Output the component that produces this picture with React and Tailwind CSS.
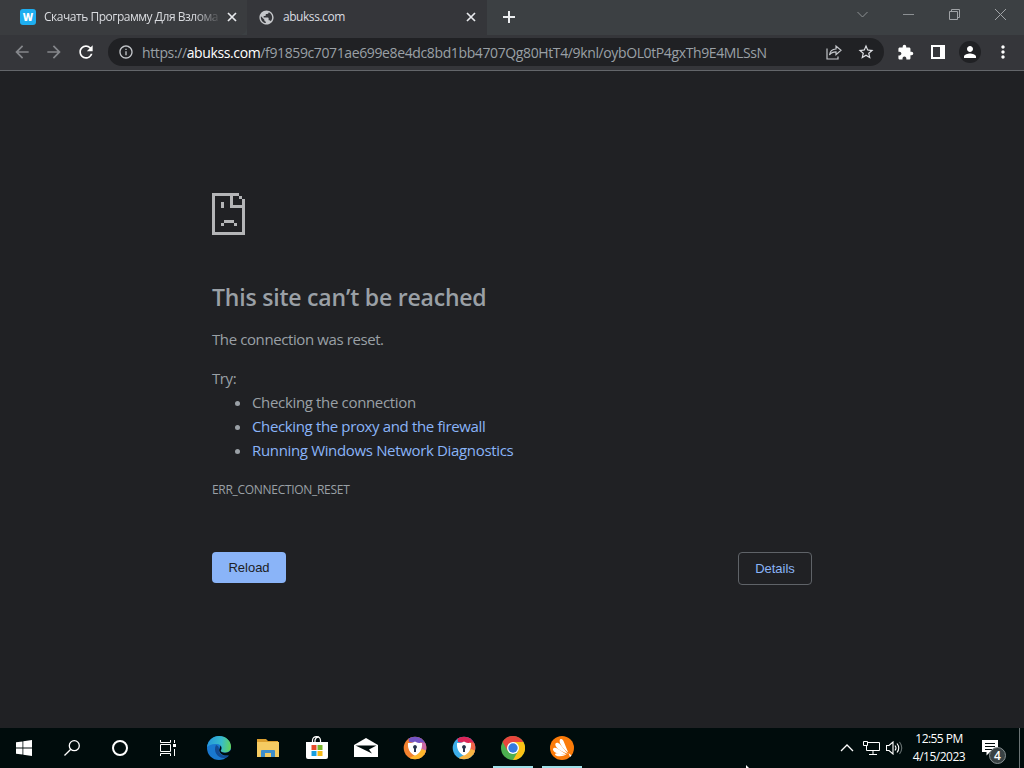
import { MdArrowBack, MdArrowForward, MdRefresh, MdInfoOutline, MdStarBorder, MdExtension, MdPerson, MdMoreVert, MdPublic } from "react-icons/md";

const CloseIcon = () => (
  <svg width="10" height="10" viewBox="0 0 10 10" fill="none" stroke="#e8eaed" strokeWidth="1.7">
    <path d="M1 1l8 8M9 1l-8 8" />
  </svg>
);

const TabStrip = () => (
  <div className="flex h-[35px] bg-[#3c4043] text-xs text-[#dadce0]">
    <div className="flex w-[247px] items-center rounded-br-lg bg-[#3a3c3f] pb-px pl-5">
      <div className="flex h-4 w-4 shrink-0 items-center justify-center rounded-[3px] bg-[#1eaef0] text-[10px] leading-none font-extrabold text-white">
        W
      </div>
      <span className="ml-2 w-[176px] whitespace-nowrap tracking-[-0.48px] [mask-image:linear-gradient(to_right,black_150px,transparent_178px)]">
        Скачать Программу Для Взлома
      </span>
      <span className="ml-[7px]">
        <CloseIcon />
      </span>
    </div>
    <div className="flex w-[240px] items-center bg-[#35363a] pb-px pl-[11px]">
      <MdPublic size={17} color="#c6c8cb" />
      <span className="ml-2 w-[176px] tracking-[-0.45px]">abukss.com</span>
      <span className="ml-[7px]">
        <CloseIcon />
      </span>
    </div>
    <div className="flex w-[44px] items-center justify-center pb-px">
      <svg width="12" height="12" viewBox="0 0 12 12" stroke="#eceef0" strokeWidth="2">
        <path d="M6 0v12M0 6h12" />
      </svg>
    </div>
    <div className="ml-auto flex h-[29px] items-center gap-[35px] pr-[18px]">
      <svg width="11" height="11" viewBox="0 0 11 11" fill="none" stroke="#8c9093">
        <path d="M.5 3l5 5 5-5" />
      </svg>
      <svg width="11" height="11" viewBox="0 0 11 11" stroke="#8c9093">
        <path d="M0 5.500h11" />
      </svg>
      <svg width="11" height="11" viewBox="0 0 11 11" fill="none" stroke="#a0a3a6">
        <path d="M.5 2.500h8v8h-8zM2.500 2.500v-2h8v8h-2" />
      </svg>
      <svg width="11" height="11" viewBox="0 0 11 11" stroke="#a0a3a6">
        <path d="M0 0l11 11M11 0L0 11" />
      </svg>
    </div>
  </div>
);

const Toolbar = () => (
  <div className="flex h-9 items-center border-b border-[#63666a] bg-[#35363a] pb-px pl-3 text-white">
    <MdArrowBack size={20} color="#85878b" />
    <MdArrowForward size={20} color="#85878b" className="ml-3" />
    <MdRefresh size={20} className="ml-3" />
    <div className="ml-3 flex h-[28px] w-[776px] items-center rounded-full bg-[#202124] pl-2.5">
      <MdInfoOutline size={16} color="#c3c6ca" />
      <span className="ml-2 w-[660px] whitespace-nowrap text-[14px] tracking-[-0.38px] text-[#9aa0a6]">
        https://<span className="text-white">abukss.com</span>
        /f91859c7071ae699e8e4dc8bd1bb4707Qg80HtT4/9knl/oybOL0tP4gxTh9E4MLSsN
      </span>
      <svg className="ml-6" width="16" height="16" viewBox="0 0 16 16" fill="none" stroke="#c3c6ca" strokeWidth="1.2">
        <path d="M1 4.500v10.500h11v-2.500" />
        <path d="M3.500 11c.4-3.800 2.500-5.800 6.500-6V2l5 4.300-5 4.300V7.900c-3 0-5 .9-6.500 3.100z" />
      </svg>
      <MdStarBorder size={18} color="#dfe1e5" className="ml-[15px]" />
    </div>
    <MdExtension size={17} className="ml-[13px]" />
    <svg className="ml-[17px]" width="14" height="14" viewBox="0 0 14 14" fill="none" stroke="white" strokeWidth="2">
      <path d="M1 1h12v12H1z" />
      <path d="M11 1v12" strokeWidth="4" />
    </svg>
    <div className="ml-[14px] flex h-[22px] w-[22px] items-center justify-center rounded-full bg-[#202124]">
      <MdPerson size={18} />
    </div>
    <MdMoreVert size={20} className="ml-3" />
  </div>
);

const SadPage = () => (
  <svg width="33" height="42" viewBox="0 0 33 42" fill="#b4b5b7" shapeRendering="crispEdges">
    <path d="M0 0h27v3h-6v9h9V6h3v36H0zM3 3v36h27V15H18V3z" fillRule="evenodd" />
    <path d="M27 3h3v3h-3zM9 9h3v6H9zM12 27h10v3H12zM9 30h3v3H9zM22 30h3v3h-3z" />
  </svg>
);

const ErrorPage = () => (
  <main className="grow bg-[#202124] pt-[122px] pl-[212px] text-[15px] leading-6 text-[#9aa0a6]">
    <div className="w-[600px]">
      <SadPage />
      <h1 className="mt-[47px] text-[23px] leading-[30px] font-semibold tracking-[-0.2px]">This site can’t be reached</h1>
      <p className="mt-[15px] tracking-[-0.4px]">The connection was reset.</p>
      <p className="mt-[15px] tracking-[-0.4px]">Try:</p>
      <ul className="list-disc pl-10">
        <li>
          <span className="tracking-[-0.34px]">Checking the connection</span>
        </li>
        <li>
          <span className="tracking-[-0.36px] text-[#8ab4f8]">Checking the proxy and the firewall</span>
        </li>
        <li>
          <span className="tracking-[-0.34px] text-[#8ab4f8]">Running Windows Network Diagnostics</span>
        </li>
      </ul>
      <p className="mt-4 text-xs leading-6 tracking-[-0.3px]">ERR_CONNECTION_RESET</p>
      <div className="mt-[50px] flex items-start justify-between font-['Liberation_Sans',sans-serif] text-[13px]">
        <button className="h-[31px] w-[74px] rounded bg-[#8ab4f8] text-[#202124]">Reload</button>
        <button className="h-[33px] w-[74px] rounded border border-[#5f6368] text-[#8ab4f8]">Details</button>
      </div>
    </div>
  </main>
);

const Edge = () => (
  <svg width="24" height="24" viewBox="0 0 24 24">
    <defs>
      <linearGradient id="edgeTop" x1="0" y1="0.4" x2="1" y2="0.5">
        <stop offset="0" stopColor="#2497dc" />
        <stop offset="0.6" stopColor="#38bccb" />
        <stop offset="1" stopColor="#62d45a" />
      </linearGradient>
    </defs>
    <circle cx="12" cy="12" r="12" fill="#1978cf" />
    <path d="M0 11C1 4.500 6 0 12 0c7 0 12 5 12 10.500 0 4-3 6-6 6-3 0-4.500-1-4-2 1.500-2 1-6-4-6.500C5.500 7.500 1.500 9 0 11z" fill="url(#edgeTop)" />
    <path d="M9 9c-3 6 1 13 8 13 2 0 3.500-.7 5-2.500-5 1.500-10-1-10-5.500 0-2 0-4-3-5z" fill="#134b93" />
    <path d="M13.500 9.500c1.200 1.500 1.200 3.400.3 4.800-.6 1.300 1.500 2.500 4.500 2.500 2.500 0 4.200-1 5.700-3v3l-2 2.500c-5 1-9.500-1.300-9.800-5.300z" fill="#000c0c" />
  </svg>
);

const Folder = () => (
  <svg width="22" height="20" viewBox="0 0 22 20">
    <path d="M0 1h9l2 2h10v4H0z" fill="#dca02f" />
    <path d="M0 4h22v15H0z" fill="#f5cb62" />
    <path d="M4 19v-6q0-1 1-1h12q1 0 1 1v6h-4v-4H8v4z" fill="#3f8ecb" />
    <path d="M8 15h6v4H8z" fill="#f5cb62" />
  </svg>
);

const Store = () => (
  <svg width="24" height="24" viewBox="0 0 24 24">
    <path d="M7.500 6V4a4 4 0 014-3.300A4 4 0 0115.500 4v2M10 6V4a4 4 0 014-3" fill="none" stroke="white" strokeWidth="1.200" />
    <path d="M1 6h22v15q0 2-2 2H3q-2 0-2-2z" fill="white" />
    <path d="M6.500 9h5v5h-5z" fill="#e74c2b" />
    <path d="M12.500 9h5v5h-5z" fill="#78b72a" />
    <path d="M6.500 15h5v5h-5z" fill="#1a9fe0" />
    <path d="M12.500 15h5v5h-5z" fill="#f7b916" />
  </svg>
);

const Mail = () => (
  <svg width="24" height="20" viewBox="0 0 24 20">
    <path d="M0 7L12 0l12 7v12H0z" fill="white" />
    <path d="M1.500 7.500h21L15 11.500l3 4z" fill="#000c0c" />
  </svg>
);

const Shield = ({ left, top, right, bottom }) => (
  <svg width="24" height="24" viewBox="0 0 24 24">
    <clipPath id="shieldClip">
      <circle cx="12" cy="12" r="11.300" />
    </clipPath>
    <g clipPath="url(#shieldClip)">
      <path d="M0 0h24v24H0z" fill={left} />
      <path d="M5 0h19v9L6 6z" fill={top} />
      <path d="M17 6l7 1v14l-7-5z" fill={right} />
      <path d="M24 15v9H3l9-5 7-6z" fill={bottom} />
    </g>
    <path d="M12 5.500c2.500 1.500 4.500 1.800 7 1.500.5 6-2 10.500-7 12.500-5-2-7.500-6.500-7-12.500 2.500.3 4.500 0 7-1.500z" fill="white" />
    <path d="M12 9a2 2 0 011 3.700V16h-2v-3.300A2 2 0 0112 9z" fill="#29344d" />
  </svg>
);

const Chrome = () => (
  <svg width="24" height="24" viewBox="0 0 24 24">
    <circle cx="12" cy="12" r="12" fill="#4caf50" />
    <path d="M1.600 6A12 12 0 0122.400 6H12L6.800 15z" fill="#e8453c" />
    <path d="M22.400 6A12 12 0 0112 24l5.200-9L12 6z" fill="#fbc116" />
    <circle cx="12" cy="12" r="6" fill="white" />
    <circle cx="12" cy="12" r="4.700" fill="#357ae0" />
  </svg>
);

const Avast = () => (
  <svg width="24" height="24" viewBox="0 0 24 24">
    <circle cx="12" cy="12" r="12" fill="#fb7b09" />
    <g fill="white">
      <path d="M10 3.500c1.500-1 3 0 3.700 2l4.500 11C14 14 8 6.500 10 3.500z" />
      <path d="M5.500 7.500c1-1.500 3-.8 4.300.6l8 9.600C10 15.500 4 10.500 5.500 7.500z" />
      <path d="M3 13c.5-1.500 2-1.700 4-.8l9.500 6.300C9 19.500 2.500 16 3 13z" />
      <path d="M5 18.300c.5-1 2-1.200 4-.7l6 1.700c-5 1.800-9.500 1.200-10-1zM18.500 17l3 2.500-1.500 1.500z" />
    </g>
  </svg>
);

const TaskItem = ({ children, open }) => (
  <div className={`flex h-10 w-[49px] items-center justify-center ${open ? "bg-[linear-gradient(#9edfe8,#9edfe8)] bg-[length:40px_2px] bg-bottom bg-no-repeat" : ""}`}>
    {children}
  </div>
);

const Taskbar = () => (
  <footer className="flex h-10 bg-[#000c0c] text-white">
    <div className="flex w-12 items-center justify-center">
      <svg width="16" height="16" viewBox="0 0 16 16" fill="white">
        <path d="M0 2.300L6.500 1.400v6.200H0zM7.300 1.300L16 0v7.600H7.300zM0 8.400h6.500v6.200L0 13.700zM7.300 8.400H16V16l-8.700-1.200z" />
      </svg>
    </div>
    <div className="flex w-12 items-center justify-center">
      <svg width="16" height="16" viewBox="0 0 16 16" fill="none" stroke="white" strokeWidth="1.300">
        <circle cx="10.300" cy="5.700" r="5" />
        <path d="M6.800 9.200L.5 15.500" />
      </svg>
    </div>
    <div className="flex w-12 items-center justify-center">
      <div className="h-4 w-4 rounded-full border-2 border-white" />
    </div>
    <div className="flex w-12 items-center justify-center">
      <svg width="16" height="16" viewBox="0 0 16 16" fill="none" stroke="white">
        <path d="M.5 0v2.500h10V0M.5 16v-2.500h10V16M.5 4.500h10v7H.5zM14.500 0v3M14.500 9v7" />
        <path d="M13 4h3v3h-3z" fill="white" stroke="none" />
      </svg>
    </div>
    <div className="ml-[2px] flex">
      <TaskItem>
        <Edge />
      </TaskItem>
      <TaskItem>
        <Folder />
      </TaskItem>
      <TaskItem>
        <Store />
      </TaskItem>
      <TaskItem>
        <Mail />
      </TaskItem>
      <TaskItem>
        <Shield left="#f5822f" top="#7454c4" right="#cc69a3" bottom="#ffb62b" />
      </TaskItem>
      <TaskItem>
        <Shield left="#3daeea" top="#dc2558" right="#f06548" bottom="#f8b543" />
      </TaskItem>
      <TaskItem open>
        <Chrome />
      </TaskItem>
      <TaskItem open>
        <Avast />
      </TaskItem>
    </div>
    <svg className="mt-[37px] ml-[159px]" width="5" height="3" viewBox="0 0 5 3" fill="white">
      <path d="M1 0l3 3H1z" />
    </svg>
    <div className="ml-auto flex items-center">
      <svg width="14" height="8" viewBox="0 0 14 8" fill="none" stroke="white" strokeWidth="1.300">
        <path d="M1 7l6-6 6 6" />
      </svg>
      <svg className="ml-[9px]" width="17" height="14" viewBox="0 0 17 14" fill="none" stroke="white">
        <path d="M5 1.500h11.500v8h-13V5M.5.500h4v4h-4zM10 9.500v4M6 13.500h8" />
      </svg>
      <svg className="ml-[6px]" width="17" height="14" viewBox="0 0 17 14" fill="none" stroke="white" strokeWidth="1.100">
        <path d="M.5 4.500H3l4-3.500v12L3 9.500H.5z" />
        <path d="M9 4.500q2 2.500 0 5M11 2.500q3.500 4.500 0 9" />
        <path d="M13.500 1q4.500 6 0 12" stroke="#657070" />
      </svg>
      <div className="ml-1 w-[64px] text-center text-xs leading-[18px] whitespace-nowrap">
        <div className="tracking-[-0.55px]">12:55 PM</div>
        <div className="tracking-[-0.5px]">4/15/2023</div>
      </div>
      <svg className="ml-[10px]" width="26" height="34" viewBox="0 0 26 34">
        <path d="M1 9h16v12H9l-3.500 3.500V21H1z" fill="white" />
        <path d="M4 12.500h10M4 15.500h10M4 18.500h7" stroke="#000c0c" />
        <circle cx="16.500" cy="24.500" r="8" fill="#394244" stroke="#879092" />
        <text x="16.500" y="29" fill="white" fontSize="12" fontWeight="600" textAnchor="middle">
          4
        </text>
      </svg>
      <div className="ml-3 h-10 w-[5px] border-l border-[#6b7475]" />
    </div>
  </footer>
);

const App = () => {
  return (
    <div className="flex h-[768px] w-[1024px] flex-col overflow-hidden font-['Open_Sans','Noto_Sans',sans-serif]">
      <TabStrip />
      <Toolbar />
      <ErrorPage />
      <Taskbar />
    </div>
  );
};

export default App;
